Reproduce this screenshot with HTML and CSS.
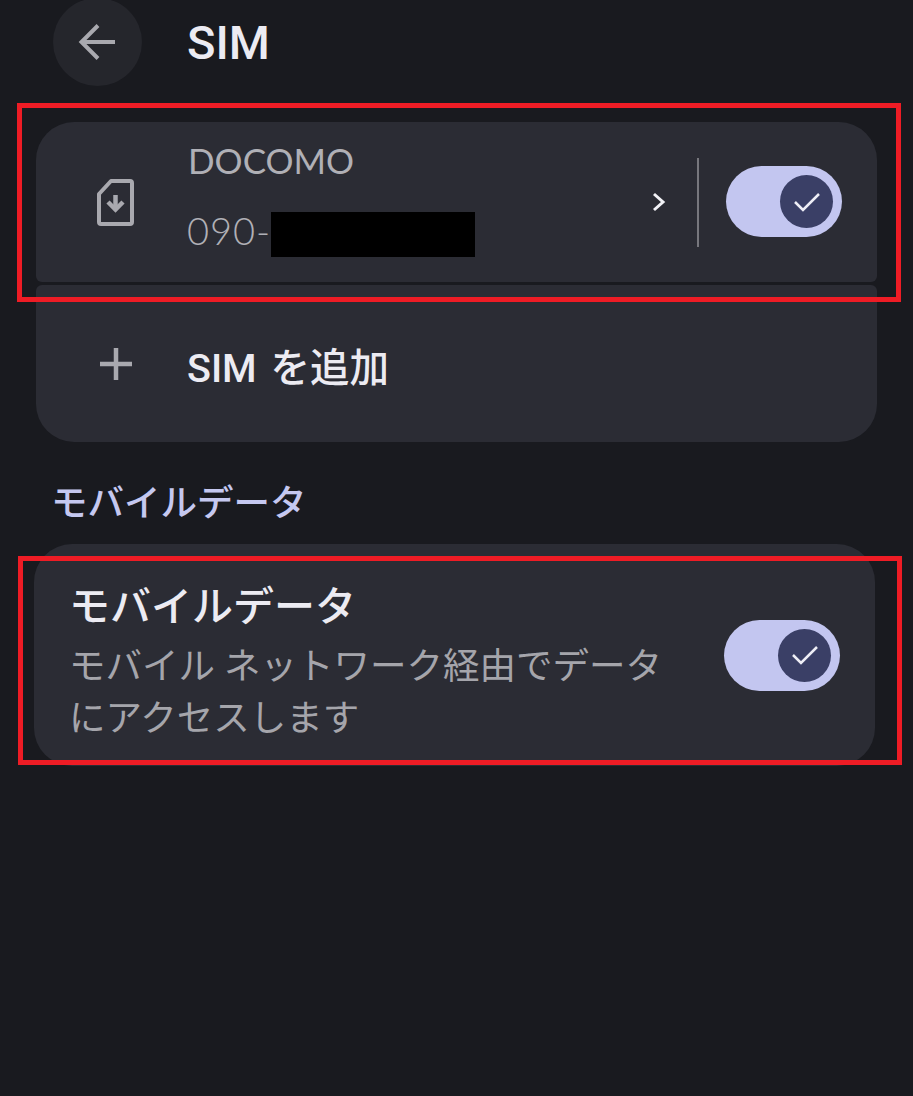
FILE: index.html
```html
<!DOCTYPE html>
<html lang="ja">
<head>
    <meta charset="UTF-8">
    <meta name="viewport" content="width=device-width, initial-scale=1.0">
    <title>SIM</title>
    <link rel="stylesheet" href="styles.css">
</head>
<body>
    <header class="top-bar">
        <div class="back-button">
            <svg class="back-icon" width="40" height="40" viewBox="0 0 40 40" fill="none">
                <path d="M37 20H4M20 3.500L3.500 20L20 36.500" stroke="currentColor" stroke-width="4"/>
            </svg>
        </div>
        <h1 class="page-title">SIM</h1>
    </header>

    <section class="sim-group">
        <div class="card sim-row">
            <svg class="row-icon" width="40" height="48" viewBox="0 0 40 48" fill="none">
                <path d="M15 3H34Q36 3 36 5V44Q36 46 34 46H5Q3 46 3 44V16Z" stroke="currentColor" stroke-width="4" stroke-linejoin="round"/>
                <path d="M19.500 17V31" stroke="currentColor" stroke-width="4.500"/>
                <path d="M12 24L19.500 31.500L27 24" stroke="currentColor" stroke-width="4.500"/>
            </svg>
            <div class="sim-text">
                <div class="carrier">DOCOMO</div>
                <div class="number">090-<span class="redacted"></span></div>
            </div>
            <svg class="chevron" width="14" height="20" viewBox="0 0 14 20" fill="none">
                <path d="M2 2L11 10L2 18" stroke="currentColor" stroke-width="3"/>
            </svg>
            <div class="divider"></div>
            <div class="switch switch-sim">
                <div class="thumb">
                    <svg width="28" height="24" viewBox="0 0 28 24" fill="none">
                        <path d="M2 12L10 20L26 4" stroke="currentColor" stroke-width="2.500"/>
                    </svg>
                </div>
            </div>
        </div>
        <div class="card add-row">
            <svg class="row-icon" width="40" height="34" viewBox="0 0 40 34" fill="none">
                <path d="M20 1V33M4 17H36" stroke="currentColor" stroke-width="4.500"/>
            </svg>
            <span class="add-label">SIM を追加</span>
        </div>
    </section>

    <h2 class="section-label">モバイルデータ</h2>

    <section class="card data-row">
        <div class="data-text">
            <div class="data-title">モバイルデータ</div>
            <div class="data-sub">モバイル ネットワーク経由でデータにアクセスします</div>
        </div>
        <div class="switch">
            <div class="thumb">
                <svg width="28" height="24" viewBox="0 0 28 24" fill="none">
                    <path d="M2 12L10 20L26 4" stroke="currentColor" stroke-width="2.500"/>
                </svg>
            </div>
        </div>
    </section>

    <div class="highlight highlight-sim"></div>
    <div class="highlight highlight-data"></div>
</body>
</html>
```

FILE: styles.css
```css
html, body {
    height: 100%;
}

body {
    position: relative;
    margin: 0;
    overflow: hidden;
    background-color: #191a1f;
    color: #ecebf2;
    font-family: Roboto, "Noto Sans CJK JP", sans-serif;
}

.top-bar {
    display: flex;
    align-items: center;
    gap: 45px;
    height: 88px;
    margin-top: -2px;
    padding-left: 53px;
}

.back-button {
    display: flex;
    align-items: center;
    justify-content: center;
    width: 89px;
    height: 88px;
    border-radius: 50%;
    background-color: #25262c;
    color: #a9a9af;
}

.page-title {
    margin: 0;
    font-size: 47px;
    font-weight: 500;
}

.sim-group {
    display: flex;
    flex-direction: column;
    gap: 3px;
    margin: 36px 36px 0;
}

.card {
    background-color: #2b2c34;
}

.row-icon {
    flex-shrink: 0;
    color: #a9a9af;
}

.sim-row {
    display: flex;
    align-items: center;
    height: 160px;
    padding: 0 35px 0 60px;
    border-radius: 38px 38px 6px 6px;
    box-sizing: border-box;
}

.sim-text {
    flex: 1;
    margin-left: 51px;
    margin-top: -14px;
    color: #b0b0b6;
    font-family: Lato, Roboto, sans-serif;
}

.carrier {
    margin-left: 1px;
    font-size: 35px;
    font-weight: 400;
    line-height: 70px;
}

.number {
    display: flex;
    align-items: center;
    font-size: 38px;
    font-weight: 300;
    letter-spacing: 1px;
    line-height: 70px;
}

.redacted {
    width: 204px;
    height: 45px;
    margin-top: 8px;
    background-color: #000;
}

.chevron {
    color: #f2f2f6;
    margin-right: 31px;
    margin-left: 1px;
}

.divider {
    width: 2px;
    height: 89px;
    margin-right: 27px;
    background-color: #77777d;
}

.switch {
    display: flex;
    align-items: center;
    justify-content: flex-end;
    flex-shrink: 0;
    width: 116px;
    height: 71px;
    padding-right: 9px;
    box-sizing: border-box;
    border-radius: 36px;
    background-color: #c3c6f0;
}

.switch-sim {
    margin-top: -1px;
}

.thumb {
    display: flex;
    align-items: center;
    justify-content: center;
    width: 53px;
    height: 53px;
    border-radius: 50%;
    background-color: #3a3f66;
    color: #eeeef6;
}

.add-row {
    display: flex;
    align-items: center;
    gap: 51px;
    height: 157px;
    padding-left: 60px;
    border-radius: 6px 6px 38px 38px;
    box-sizing: border-box;
}

.add-label {
    margin-top: 2px;
    font-size: 39.500px;
    font-weight: 500;
    word-spacing: 4px;
}

.section-label {
    margin: 37px 0 0 51px;
    font-size: 36.500px;
    font-weight: 500;
    line-height: 50px;
    color: #c5c8f0;
}

.data-row {
    display: flex;
    align-items: center;
    justify-content: space-between;
    height: 222px;
    margin: 15px 38px 0 34px;
    padding: 0 35px 0 35px;
    border-radius: 38px;
    box-sizing: border-box;
}

.data-text {
    width: 610px;
    margin-top: 16px;
}

.data-title {
    font-size: 41px;
    font-weight: 500;
    line-height: 50px;
}

.data-sub {
    margin-top: 9px;
    font-size: 36.500px;
    line-height: 52px;
    color: #a5a5ab;
}

.highlight {
    position: absolute;
    border: 5px solid #ee1c25;
    box-sizing: border-box;
}

.highlight-sim {
    left: 17px;
    top: 103px;
    width: 884px;
    height: 199px;
}

.highlight-data {
    left: 18px;
    top: 556px;
    width: 884px;
    height: 209px;
}
```
